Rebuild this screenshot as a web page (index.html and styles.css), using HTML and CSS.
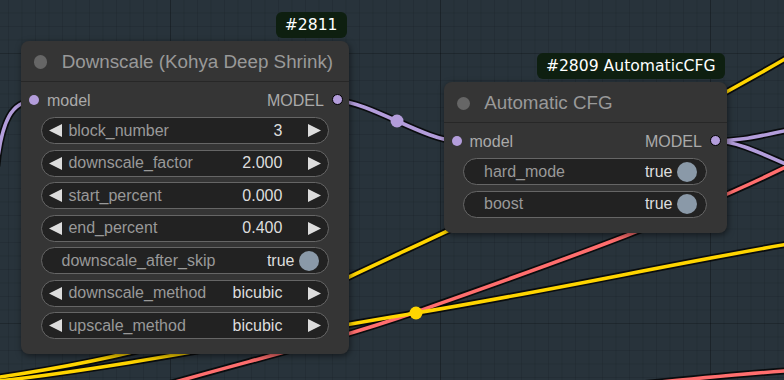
FILE: index.html
```html
<!DOCTYPE html>
<html>

<head>
	<meta charset="utf-8" />
	<title>Node graph: Kohya Deep Shrink + Automatic CFG</title>
	<meta name="viewport" content="width=device-width, initial-scale=1" />
	<link rel="stylesheet" href="styles.css">
</head>

<body>
	<main class="canvas">
		<!-- links are drawn under the nodes -->
		<svg class="links" width="784" height="380" viewBox="0 0 784 380">
			<g class="edge">
				<path d="M-3,165 C2,120 12,101 34,101" />
				<path d="M337,101 C368,101 426,141 457,141" />
				<path d="M715,141 C745,141 765,134 800,128" />
				<path d="M715,141 C740,141 770,158 800,170" />
				<path d="M0,377 C116,360 233,332 349,277 C494,209 639,144 790,56" />
				<path d="M-10,382 C120,368 280,335 416,313 C550,291 680,262 800,242" />
				<path d="M140,392 C250,360 330,342 416,312 C540,268 680,220 800,160" />
				<path d="M640,384 C700,378 750,373 800,370" />
			</g>
			<g class="wire model">
				<path d="M-3,165 C2,120 12,101 34,101" />
				<path d="M337,101 C368,101 426,141 457,141" />
				<path d="M715,141 C745,141 765,134 800,128" />
				<path d="M715,141 C740,141 770,158 800,170" />
			</g>
			<g class="wire vae">
				<path d="M140,392 C250,360 330,342 416,312 C540,268 680,220 800,160" />
				<path d="M640,384 C700,378 750,373 800,370" />
			</g>
			<g class="wire clip">
				<path d="M0,377 C116,360 233,332 349,277 C494,209 639,144 790,56" />
				<path d="M-10,382 C120,368 280,335 416,313 C550,291 680,262 800,242" />
			</g>
			<circle class="link-dot model" cx="397" cy="121" r="6.5" />
			<circle class="link-dot clip" cx="416" cy="313" r="6.5" />
		</svg>

		<section class="node node-shrink">
			<div class="badge">#2811</div>
			<header class="title"><span class="title-dot"></span>Downscale (Kohya Deep Shrink)</header>
			<div class="node-body">
				<div class="slots">
					<span class="slot"><i class="dot"></i>model</span>
					<span class="slot">MODEL<i class="dot out"></i></span>
				</div>
				<div class="widgets">
					<div class="widget">
						<svg class="arrow" viewBox="0 0 13 13"><polygon points="13,0 13,13 0,6.5" /></svg>
						<span class="label">block_number</span>
						<span class="value">3</span>
						<svg class="arrow right" viewBox="0 0 13 13"><polygon points="0,0 13,6.5 0,13" /></svg>
					</div>
					<div class="widget">
						<svg class="arrow" viewBox="0 0 13 13"><polygon points="13,0 13,13 0,6.5" /></svg>
						<span class="label">downscale_factor</span>
						<span class="value">2.000</span>
						<svg class="arrow right" viewBox="0 0 13 13"><polygon points="0,0 13,6.5 0,13" /></svg>
					</div>
					<div class="widget">
						<svg class="arrow" viewBox="0 0 13 13"><polygon points="13,0 13,13 0,6.5" /></svg>
						<span class="label">start_percent</span>
						<span class="value">0.000</span>
						<svg class="arrow right" viewBox="0 0 13 13"><polygon points="0,0 13,6.5 0,13" /></svg>
					</div>
					<div class="widget">
						<svg class="arrow" viewBox="0 0 13 13"><polygon points="13,0 13,13 0,6.5" /></svg>
						<span class="label">end_percent</span>
						<span class="value">0.400</span>
						<svg class="arrow right" viewBox="0 0 13 13"><polygon points="0,0 13,6.5 0,13" /></svg>
					</div>
					<div class="widget toggle">
						<span class="label">downscale_after_skip</span>
						<span class="value">true</span>
						<span class="knob"></span>
					</div>
					<div class="widget">
						<svg class="arrow" viewBox="0 0 13 13"><polygon points="13,0 13,13 0,6.5" /></svg>
						<span class="label">downscale_method</span>
						<span class="value">bicubic</span>
						<svg class="arrow right" viewBox="0 0 13 13"><polygon points="0,0 13,6.5 0,13" /></svg>
					</div>
					<div class="widget">
						<svg class="arrow" viewBox="0 0 13 13"><polygon points="13,0 13,13 0,6.5" /></svg>
						<span class="label">upscale_method</span>
						<span class="value">bicubic</span>
						<svg class="arrow right" viewBox="0 0 13 13"><polygon points="0,0 13,6.5 0,13" /></svg>
					</div>
				</div>
			</div>
		</section>

		<section class="node node-cfg">
			<div class="badge">#2809 AutomaticCFG</div>
			<header class="title"><span class="title-dot"></span>Automatic CFG</header>
			<div class="node-body">
				<div class="slots">
					<span class="slot"><i class="dot"></i>model</span>
					<span class="slot">MODEL<i class="dot out"></i></span>
				</div>
				<div class="widgets">
					<div class="widget toggle">
						<span class="label">hard_mode</span>
						<span class="value">true</span>
						<span class="knob"></span>
					</div>
					<div class="widget toggle">
						<span class="label">boost</span>
						<span class="value">true</span>
						<span class="knob"></span>
					</div>
				</div>
			</div>
		</section>
	</main>
</body>

</html>
```

FILE: styles.css
```css
body {
	margin: 0;
}

.canvas {
	position: relative;
	width: 784px;
	height: 380px;
	overflow: hidden;
	background-color: #28333b;
	background-image:
		linear-gradient(to right, rgba(0, 0, 0, 0.22) 1px, transparent 1px),
		linear-gradient(to bottom, rgba(0, 0, 0, 0.14) 1px, transparent 1px),
		linear-gradient(to right, rgba(0, 0, 0, 0.09) 1px, transparent 1px),
		linear-gradient(to bottom, rgba(0, 0, 0, 0.09) 1px, transparent 1px);
	background-size: 270px 270px, 270px 270px, 13.5px 13.5px, 13.5px 13.5px;
	background-position: 170px 53px, 170px 53px, 170px 53px, 170px 53px;
	font-family: "Liberation Sans", Arial, sans-serif;
}

/* links */
.links {
	position: absolute;
	left: 0;
	top: 0;
}

.links path {
	fill: none;
	stroke-linecap: round;
}

.edge path {
	stroke: rgba(0, 0, 0, 0.75);
	stroke-width: 7;
}

.wire path {
	stroke-width: 3.6;
}

.wire.model path { stroke: #b39ddb; }
.wire.clip path { stroke: #ffd500; }
.wire.vae path { stroke: #ff6e6e; }

.link-dot.model { fill: #b39ddb; }
.link-dot.clip { fill: #ffd500; }

/* nodes */
.node {
	position: absolute;
	box-sizing: border-box;
	background: #353535;
	border-radius: 8px;
	box-shadow: 1px 2px 6px rgba(0, 0, 0, 0.5);
}

.node-shrink {
	left: 21px;
	top: 41px;
	width: 328px;
}

.node-cfg {
	left: 443.5px;
	top: 82.3px;
	width: 283.5px;
}

.badge {
	position: absolute;
	right: 2.5px;
	bottom: calc(100% + 3px);
	height: 26px;
	padding: 0 9px;
	border-radius: 6px;
	background: #0e1f10;
	color: #fff;
	font-family: "DejaVu Sans", sans-serif;
	font-size: 15.6px;
	line-height: 26px;
	white-space: nowrap;
}

.title {
	box-sizing: border-box;
	height: 41px;
	padding: 2px 0 0 13px;
	border-bottom: 1px solid #272727;
	display: flex;
	align-items: center;
	gap: 14.3px;
	color: #999;
	font-size: 18.8px;
	white-space: nowrap;
}

.title-dot {
	width: 13.4px;
	height: 13.4px;
	border-radius: 50%;
	background: #666;
	flex: none;
}

.node-body {
	padding: 8px 0 15px;
}

.slots {
	height: 21px;
	padding: 0 6.2px 0 8px;
	display: flex;
	align-items: center;
	justify-content: space-between;
	color: #aaa;
	font-size: 16px;
}

.slot {
	display: flex;
	align-items: center;
	gap: 8px;
	line-height: 21px;
}

.dot {
	width: 10px;
	height: 10px;
	border-radius: 50%;
	background: #b39ddb;
	margin-top: -2px;
}

.dot.out {
	box-sizing: border-box;
	width: 11px;
	height: 11px;
	border: 1.5px solid #000;
}

.widgets {
	margin-top: 6px;
	padding: 0 20px 0 19.5px;
	display: flex;
	flex-direction: column;
	gap: 5.5px;
}

.widget {
	box-sizing: border-box;
	height: 27px;
	padding: 0 7.3px 0 7.6px;
	border: 1px solid #666;
	border-radius: 14px;
	background: #222;
	display: flex;
	align-items: center;
	color: #999;
	font-size: 16px;
	white-space: nowrap;
}

.arrow {
	width: 13px;
	height: 13px;
	flex: none;
	fill: #ddd;
}

.arrow.right {
	margin-left: 25.3px;
}

.label {
	margin-left: 6.3px;
}

.value {
	margin-left: auto;
	color: #ddd;
}

.widget.toggle {
	padding: 0 9.5px 0 20px;
}

.widget.toggle .label {
	margin-left: 0;
}

.knob {
	width: 20px;
	height: 20px;
	margin-left: 4px;
	border-radius: 50%;
	background: #8a99a8;
	flex: none;
}
```
